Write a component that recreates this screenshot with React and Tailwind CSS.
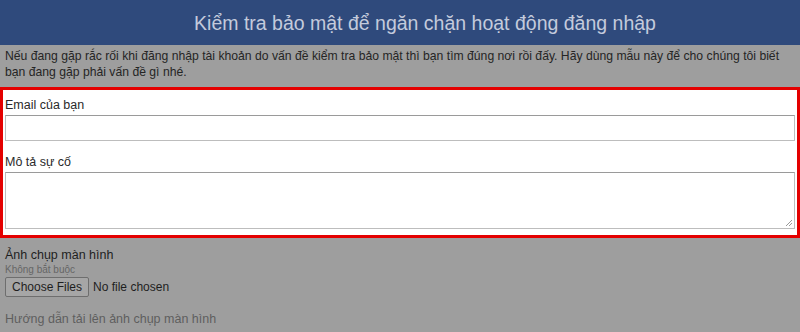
export default function App() {
    return (
        <div className="w-[800px] h-[332px] overflow-hidden bg-[#9e9e9e] font-['Liberation_Sans',Arial,sans-serif] text-[#1e1e1e]">
            <div className="h-[45px] bg-[#2f4a7c] flex items-center justify-center pl-[50px] pt-[2px]">
                <h1 className="text-[19.5px] text-[#c4cbdc]">Kiểm tra bảo mật để ngăn chặn hoạt động đăng nhập</h1>
            </div>
            <p className="px-[5px] pt-[3px] text-[12.2px] leading-[16px] text-[#252525]">
                Nếu đang gặp rắc rối khi đăng nhập tài khoản do vấn đề kiểm tra bảo mật thì bạn tìm đúng nơi rồi đấy. Hãy dùng mẫu này để cho chúng tôi biết bạn đang gặp phải vấn đề gì nhé.
            </p>
            <div className="mt-[7px] h-[151px] border-[3px] border-[#e40000] bg-white pl-[2px] pr-[2px]">
                <div className="pt-[8px] text-[12.5px] leading-[15px] text-[#2a2a2a]">Email của bạn</div>
                <div className="mt-[2px] h-[26px] border border-[#bdbdbd] border-t-[#9a9a9a]" />
                <div className="mt-[14px] text-[12.5px] leading-[15px] text-[#2a2a2a]">Mô tả sự cố</div>
                <div className="relative mt-[2px] h-[57px] border border-[#bdbdbd] border-t-[#9a9a9a]">
                    <svg className="absolute right-[1px] bottom-[1px]" width="8" height="8" viewBox="0 0 8 8">
                        <path d="M7 1 L1 7 M7 4 L4 7" stroke="#9a9a9a" strokeWidth="1" />
                    </svg>
                </div>
            </div>
            <div className="px-[5px] pt-[10px]">
                <div className="text-[12.5px] leading-[15px] text-[#1e1e1e]">Ảnh chụp màn hình</div>
                <div className="text-[10px] leading-[13px] text-[#666]">Không bắt buộc</div>
                <div className="flex items-center gap-[4px] mt-[1px]">
                    <div className="h-[20px] px-[6px] flex items-center border border-[#6e6e6e] rounded-[2px] bg-[#a6a6a6] text-[12px] text-[#1e1e1e]">Choose Files</div>
                    <span className="text-[12px] text-[#1e1e1e]">No file chosen</span>
                </div>
                <div className="mt-[15px] text-[12.5px] leading-[15px] text-[#5e5e5e]">Hướng dẫn tải lên ảnh chụp màn hình</div>
            </div>
        </div>
    )
}
